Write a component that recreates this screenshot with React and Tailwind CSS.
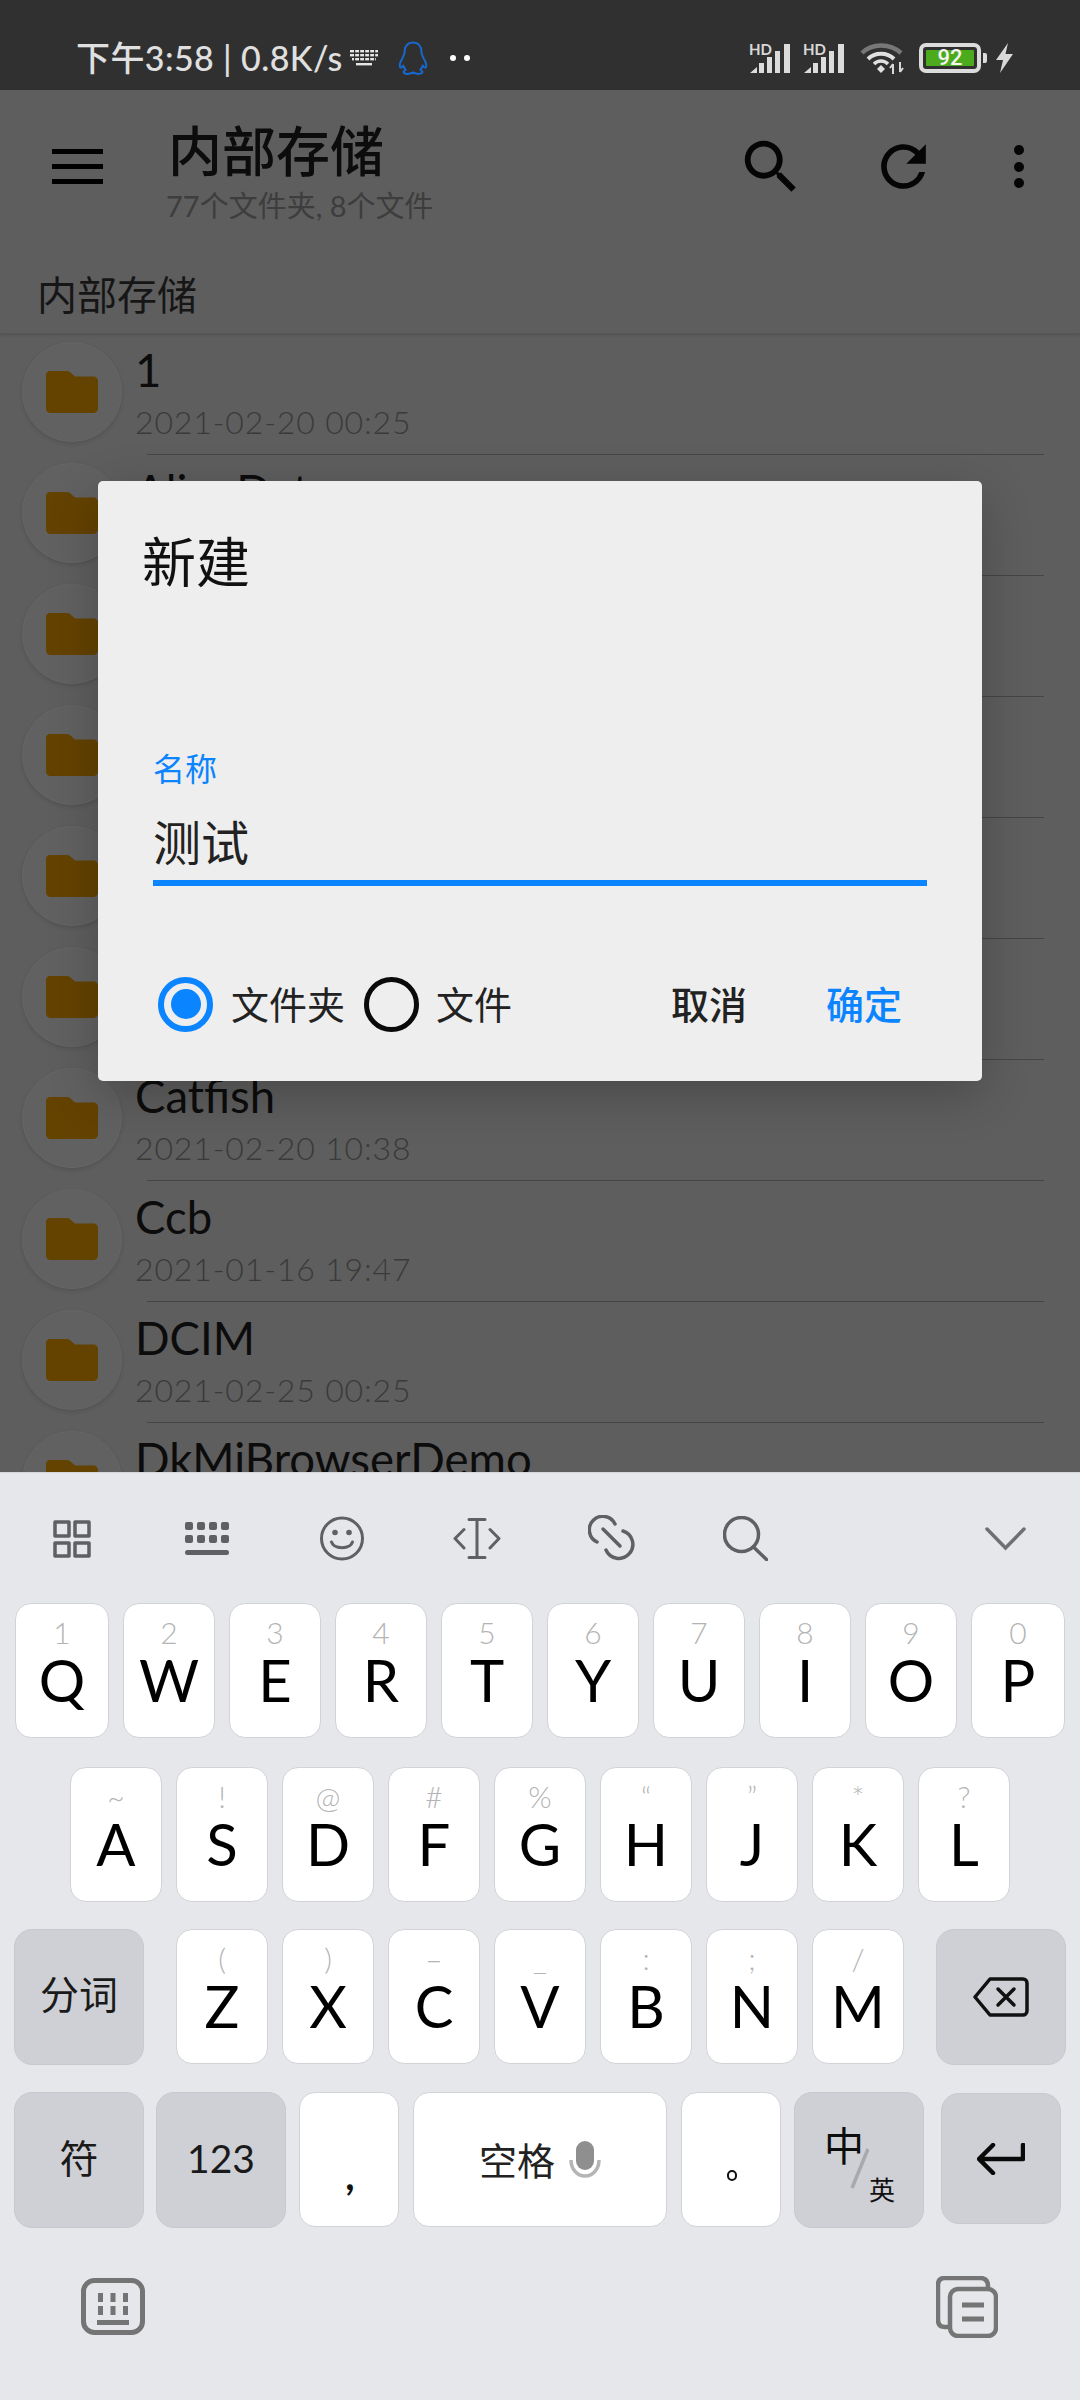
const SANS = '"Lato","Noto Sans CJK SC",sans-serif';

function Signal() {
  return (
    <svg width="41" height="30" viewBox="0 0 41 30">
      <text x="0" y="12" fontSize="15" fontWeight="700" fill="#d8d8d8" fontFamily="Lato, sans-serif">HD</text>
      <polygon points="1,30 8,24 8,30" fill="#dcdcdc" />
      <rect x="10" y="20" width="5" height="10" fill="#dcdcdc" />
      <rect x="18" y="14" width="5" height="16" fill="#dcdcdc" />
      <rect x="26" y="8" width="5" height="22" fill="#dcdcdc" />
      <rect x="35" y="1" width="6" height="29" fill="#dcdcdc" />
    </svg>
  );
}

function Wifi() {
  return (
    <svg width="44" height="32" viewBox="0 0 44 32" fill="none" strokeLinecap="butt">
      <path d="M2 11C12 1 30 1 41 11" stroke="#777" strokeWidth="4.5" />
      <path d="M8 17C15 10 27 10 34 17" stroke="#e0e0e0" strokeWidth="4" />
      <path d="M14 22C18 18 24 18 28 22" stroke="#e0e0e0" strokeWidth="3.5" />
      <path d="M17 27L21 23L25 27L21 31Z" fill="#e0e0e0" />
      <path d="M33 32V22M33 22L30 26M40 20V30M40 30L43 26" stroke="#d8d8d8" strokeWidth="2" />
    </svg>
  );
}

function Battery() {
  return (
    <div className="flex items-center">
      <div className="w-[62px] h-[30px] rounded-[7px] border-[4px] border-[#dcdcdc] p-[3px] flex">
        <div className="flex-1 bg-[#4cab1c] rounded-[1px] flex items-center justify-center text-[#f4f4f4] text-[22px] leading-none font-medium" style={{ fontFamily: '"Roboto",sans-serif' }}>92</div>
      </div>
      <div className="w-[4px] h-[10px] bg-[#dcdcdc] ml-[2px] rounded-r-[2px]" />
    </div>
  );
}

function Status() {
  return (
    <div className="h-[90px] bg-[#303030] flex items-center pt-[26px] text-[#e0e0e0]" style={{ fontFamily: '"Lato","Noto Sans CJK SC",sans-serif' }}>
      <span className="ml-[76px] w-[264px] text-[34px] leading-[40px] font-medium tracking-[0.4px] whitespace-nowrap">下午3:58 | 0.8K/s</span>
      <svg className="ml-[10px]" width="28" height="16" viewBox="0 0 28 16">
        <g fill="#e6e6e6">
          <rect x="0" y="0" width="28" height="2.4" />
          <rect x="0" y="4" width="28" height="2.4" />
          <rect x="2" y="8" width="24" height="2.4" />
          <rect x="6" y="13" width="16" height="2.4" />
        </g>
        <g fill="#303030">
          <rect x="4" y="0" width="1.2" height="11" /><rect x="9" y="0" width="1.2" height="11" /><rect x="14" y="0" width="1.2" height="11" /><rect x="19" y="0" width="1.2" height="11" /><rect x="24" y="0" width="1.2" height="11" />
        </g>
      </svg>
      <svg className="ml-[20px]" width="30" height="34" viewBox="0 0 30 34" fill="none" stroke="#1768cf" strokeWidth="2" strokeLinejoin="round">
        <path d="M15 1.500C9 1.500 6.600 6 6.500 11.500C6.400 14.500 4.500 17 3 20C1.600 23 1.300 26 2.500 26.500C3.600 27 4.600 25.500 5.200 24.500C5.700 26.300 6.600 27.800 7.600 28.800C5.600 29.800 5 31.400 6.400 32.200C8.600 33.400 12.800 33 15 31.400C17.200 33 21.400 33.400 23.600 32.200C25 31.400 24.400 29.800 22.400 28.800C23.400 27.800 24.300 26.300 24.800 24.500C25.400 25.500 26.400 27 27.500 26.500C28.700 26 28.400 23 27 20C25.500 17 23.600 14.500 23.500 11.500C23.400 6 21 1.500 15 1.500Z" />
      </svg>
      <div className="ml-[22px] w-[6px] h-[6px] rounded-full bg-white" />
      <div className="ml-[8px] w-[6px] h-[6px] rounded-full bg-white" />
      <div className="ml-auto flex items-center">
        <Signal />
        <div className="ml-[13px]"><Signal /></div>
        <div className="ml-[16px]"><Wifi /></div>
        <div className="ml-[15px]"><Battery /></div>
        <svg className="ml-[8px] mr-[66px]" width="19" height="30" viewBox="0 0 19 30">
          <path d="M13 0L1 17H8L5 30L18 11H10.500Z" fill="#d8d8d8" />
        </svg>
      </div>
    </div>
  );
}

function Header() {
  return (
    <div className="h-[244px] border-b border-[#555555] shadow-[0_1px_3px_rgba(0,0,0,0.15)] relative">
      <div className="h-[153px] flex items-center">
        <div className="ml-[52px] w-[51px] h-[35px] flex flex-col justify-between">
          <div className="h-[5px] bg-black" />
          <div className="h-[5px] bg-black" />
          <div className="h-[5px] bg-black" />
        </div>
        <div className="ml-[65px] self-start pt-[32px]">
          <div className="text-[54px] leading-[60px] font-medium text-[#0c0c0c]">内部存储</div>
          <div className="text-[29px] leading-[36px] mt-[6px] text-[#3d3d3d] -ml-[2px] whitespace-nowrap">77个文件夹, 8个文件</div>
        </div>
        <svg className="ml-auto" width="70" height="70" viewBox="0 0 24 24" style={{ marginRight: 64 }}>
          <path fill="#050505" d="M15.500 14h-.79l-.28-.27A6.471 6.471 0 0 0 16 9.500 6.500 6.500 0 1 0 9.500 16c1.610 0 3.090-.59 4.230-1.570l.27.28v.79l5 4.990L20.490 19l-4.990-5zm-6 0C7.010 14 5 11.990 5 9.500S7.010 5 9.500 5 14 7.010 14 9.500 11.990 14 9.500 14z" />
        </svg>
        <svg width="67" height="67" viewBox="0 0 24 24" className="mr-[77px]">
          <path fill="#050505" d="M17.650 6.350A7.958 7.958 0 0 0 12 4c-4.420 0-7.990 3.580-7.990 8s3.570 8 7.990 8c3.730 0 6.840-2.550 7.730-6h-2.080A5.990 5.990 0 0 1 12 18c-3.310 0-6-2.690-6-6s2.690-6 6-6c1.660 0 3.140.69 4.220 1.780L13 11h7V4l-2.350 2.350z" />
        </svg>
        <div className="mr-[56px] w-[10px] h-[43px] flex flex-col justify-between">
          <div className="h-[10px] rounded-full bg-[#050505]" />
          <div className="h-[10px] rounded-full bg-[#050505]" />
          <div className="h-[10px] rounded-full bg-[#050505]" />
        </div>
      </div>
      <div className="ml-[37px] mt-[27px] text-[40px] leading-[50px] text-[#161616]">内部存储</div>
    </div>
  );
}

const rows = [
  ['1', '2021-02-20 00:25'],
  ['AlienData', '2021-02-20 00:25'],
  ['Android', '2021-02-20 00:25'],
  ['Apps', '2021-02-20 00:25'],
  ['Backup', '2021-02-20 00:25'],
  ['Books', '2021-02-20 00:25'],
  ['Catfish', '2021-02-20 10:38'],
  ['Ccb', '2021-01-16 19:47'],
  ['DCIM', '2021-02-25 00:25'],
  ['DkMiBrowserDemo', '2021-02-25 00:25'],
];

function Row({ name, date }) {
  return (
    <div className="h-[121px] flex items-start">
      <div className="ml-[22px] mt-[8px] w-[100px] h-[100px] shrink-0 rounded-full bg-[#616161] border border-[#666666] shadow-[0_2px_4px_rgba(0,0,0,0.12)] flex items-center justify-center">
        <svg width="52" height="42" viewBox="0 0 52 42">
          <path d="M4 0H21C23 0 24 1 25 2L29 5.500H47C50 5.500 52 7.500 52 10V37C52 40 50 42 47 42H5C2 42 0 40 0 37V4C0 1.500 2 0 4 0Z" fill="#644200" />
        </svg>
      </div>
      <div className="ml-[13px] flex-1">
        <div className="mt-[11px] h-[50px] text-[45.5px] leading-[50px] text-[#0c0c0c]">{name}</div>
        <div className="mt-[9px] h-[36px] text-[32px] leading-[36px] font-light text-[#3a3a3a] tracking-[0.85px]">{date}</div>
        <div className="mt-[14px] ml-[12px] w-[897px] h-[1px] bg-[#454545]" />
      </div>
    </div>
  );
}

function Dialog() {
  return (
    <div className="absolute left-[98px] top-[391px] w-[884px] h-[600px] bg-[#eeeeee] rounded-[5px] shadow-[0_14px_50px_rgba(0,0,0,0.22)] pt-[52px]">
      <div className="ml-[44px] h-[60px] text-[54px] leading-[60px] text-[#111111]">新建</div>
      <div className="ml-[55px] mt-[156px] h-[40px] text-[32px] leading-[40px] text-[#0a84ff]">名称</div>
      <div className="ml-[55px] mt-[24px] h-[60px] text-[48px] leading-[60px] text-[#222222]">测试</div>
      <div className="ml-[55px] mt-[7px] w-[774px] h-[6px] bg-[#0a84ff]" />
      <div className="mt-[88px] h-[60px] flex items-center text-[38px] leading-[60px]">
        <div className="ml-[60px] w-[55px] h-[55px] rounded-full border-[6px] border-[#0a84ff] flex items-center justify-center">
          <div className="w-[30px] h-[30px] rounded-full bg-[#0a84ff]" />
        </div>
        <span className="ml-[18px] text-[#222222]">文件夹</span>
        <div className="ml-[19px] w-[55px] h-[55px] rounded-full border-[5px] border-[#0a0a0a]" />
        <span className="ml-[17px] text-[#222222]">文件</span>
        <span className="ml-[159px] font-medium text-[#222222]">取消</span>
        <span className="ml-[79px] font-medium text-[#0a84ff]">确定</span>
      </div>
    </div>
  );
}

function Key({ w, sub, label }) {
  return (
    <div className={`${w} h-[135px] bg-white rounded-[16px] border border-[#d2d3d7] flex flex-col items-center shrink-0`}>
      <div className="mt-[10px] h-[36px] text-[30px] leading-[36px] text-[#b4b4b4] font-light">{sub}</div>
      <div className="h-[60px] text-[58px] leading-[60px] text-black">{label}</div>
    </div>
  );
}

const r1 = [['1', 'Q'], ['2', 'W'], ['3', 'E'], ['4', 'R'], ['5', 'T'], ['6', 'Y'], ['7', 'U'], ['8', 'I'], ['9', 'O'], ['0', 'P']];
const r2 = [['~', 'A'], ['!', 'S'], ['@', 'D'], ['#', 'F'], ['%', 'G'], ['“', 'H'], ['”', 'J'], ['*', 'K'], ['?', 'L']];
const r3 = [['(', 'Z'], [')', 'X'], ['–', 'C'], ['_', 'V'], [':', 'B'], [';', 'N'], ['/', 'M']];

function ToolIcons() {
  const s = '#5f6064';
  return (
    <div className="h-[131px] flex items-center">
      <svg className="ml-[53px]" width="38" height="38" viewBox="0 0 38 38" fill="none" stroke={s} strokeWidth="3.500" strokeLinejoin="round">
        <rect x="2" y="2" width="14" height="14" /><rect x="22" y="2" width="14" height="14" /><rect x="2" y="23" width="14" height="13" /><rect x="22" y="23" width="14" height="13" />
      </svg>
      <svg className="ml-[94px]" width="44" height="33" viewBox="0 0 44 33" fill={s}>
        <rect x="0" y="0" width="8" height="8" rx="2" /><rect x="12" y="0" width="8" height="8" rx="2" /><rect x="24" y="0" width="8" height="8" rx="2" /><rect x="36" y="0" width="8" height="8" rx="2" />
        <rect x="0" y="13" width="8" height="8" rx="2" /><rect x="12" y="13" width="8" height="8" rx="2" /><rect x="24" y="13" width="8" height="8" rx="2" /><rect x="36" y="13" width="8" height="8" rx="2" />
        <rect x="0" y="28" width="44" height="5" rx="2.500" />
      </svg>
      <svg className="ml-[91px]" width="44" height="45" viewBox="0 0 44 45" fill="none" stroke={s} strokeWidth="3" strokeLinecap="round">
        <circle cx="22" cy="22.500" r="20.500" />
        <circle cx="15" cy="16.500" r="2.800" fill={s} stroke="none" /><circle cx="29" cy="16.500" r="2.800" fill={s} stroke="none" />
        <path d="M11.500 26C14 33.500 30 33.500 32.500 26" />
      </svg>
      <svg className="ml-[89px]" width="48" height="41" viewBox="0 0 48 41" fill="none" stroke={s} strokeWidth="3" strokeLinecap="round" strokeLinejoin="round">
        <path d="M16 1.500H32M16 39.500H32M24 1.500V39.500" />
        <path d="M11 11.500L2 20.500L11 30M37 11.500L46 20.500L37 30" />
      </svg>
      <svg className="ml-[87px]" width="47" height="47" viewBox="0 0 47 47" fill="none" stroke={s} strokeWidth="3.500" strokeLinecap="round">
        <path d="M27 9A13.500 13.500 0 1 0 9 27" />
        <path d="M35 16A14 14 0 1 1 18 35" />
        <path d="M15 14L32 31" />
      </svg>
      <svg className="ml-[88px]" width="45" height="45" viewBox="0 0 45 45" fill="none" stroke={s} strokeWidth="3.500" strokeLinecap="round">
        <circle cx="18.500" cy="18.500" r="17" /><path d="M30.500 31L43.500 43.500" />
      </svg>
      <svg className="ml-auto mr-[54px]" width="41" height="24" viewBox="0 0 41 24" fill="none" stroke="#6f7074" strokeWidth="3.500" strokeLinecap="round">
        <path d="M2 2L20.500 21L39 2" />
      </svg>
    </div>
  );
}

function DarkKey({ w, h, children }) {
  return <div className={`${w} ${h} bg-[#cfd0d5] rounded-[18px] border border-[#c8c9ce] flex items-center justify-center shrink-0 relative`}>{children}</div>;
}

function Keyboard() {
  return (
    <div className="h-[928px] bg-[#e6e7eb] border-t border-[#d5d6da]">
      <ToolIcons />
      <div className="flex gap-[14px] ml-[15px] -mt-[1px]">
        {r1.map(([s, l], i) => <Key key={l} w={i === 0 || i === 9 ? 'w-[94px]' : 'w-[92px]'} sub={s} label={l} />)}
      </div>
      <div className="flex gap-[14px] ml-[70px] mt-[29px]">
        {r2.map(([s, l]) => <Key key={l} w="w-[92px]" sub={s} label={l} />)}
      </div>
      <div className="flex gap-[14px] ml-[14px] mt-[27px]">
        <DarkKey w="w-[130px] mr-[18px]" h="h-[136px]"><span className="text-[39px] leading-none -mt-[6px] text-[#1a1a1a]">分词</span></DarkKey>
        {r3.map(([s, l]) => <Key key={l} w="w-[92px]" sub={s} label={l} />)}
        <DarkKey w="w-[130px] ml-[18px]" h="h-[136px]">
          <svg width="56" height="40" viewBox="0 0 56 40" fill="none" stroke="#111" strokeWidth="3.500" strokeLinejoin="round" strokeLinecap="round">
            <path d="M17 2H50C52 2 54 3.500 54 6V34C54 36.500 52 38 50 38H17L2 20Z" />
            <path d="M25 12L41 28M41 12L25 28" />
          </svg>
        </DarkKey>
      </div>
      <div className="flex ml-[14px] mt-[27px]">
        <DarkKey w="w-[130px]" h="h-[136px]"><span className="text-[39px] leading-none -mt-[4px] text-[#1a1a1a]">符</span></DarkKey>
        <DarkKey w="w-[130px] ml-[12px]" h="h-[136px]"><span className="text-[39px] leading-none -mt-[4px] text-[#1a1a1a]">123</span></DarkKey>
        <div className="ml-[13px] w-[100px] h-[135px] bg-white rounded-[16px] border border-[#d2d3d7] flex items-center justify-center shrink-0">
          <span className="text-[40px] leading-none font-bold text-[#111] mt-[30px] ml-[2px]">,</span>
        </div>
        <div className="ml-[14px] w-[254px] h-[135px] bg-white rounded-[16px] border border-[#d2d3d7] flex items-center justify-center shrink-0">
          <span className="text-[38px] leading-none text-[#222]">空格</span>
          <svg className="ml-[14px]" width="32" height="37" viewBox="0 0 32 37" fill="none">
            <rect x="7" y="0" width="18" height="29" rx="9" fill="#8f8f8f" />
            <path d="M2 19C2 28 8 35 16 35C24 35 30 28 30 19" stroke="#b5b5b5" strokeWidth="3.500" />
          </svg>
        </div>
        <div className="ml-[14px] w-[100px] h-[135px] bg-white rounded-[16px] border border-[#d2d3d7] flex items-center justify-center shrink-0">
          <span className="w-[10px] h-[11px] rounded-full border-[2px] border-[#111] mt-[32px] ml-[2px]" />
        </div>
        <DarkKey w="w-[130px] ml-[13px]" h="h-[136px]">
          <span className="absolute left-[29px] top-[33px] text-[40px] leading-none text-[#0d0d0d]">中</span>
          <svg className="absolute left-[54px] top-[55px]" width="20" height="42" viewBox="0 0 20 42"><path d="M19 1L3 40" stroke="#a8a9ac" strokeWidth="3.500" /></svg>
          <span className="absolute left-[74px] top-[84px] text-[26px] leading-none text-[#111]">英</span>
        </DarkKey>
        <DarkKey w="w-[120px] ml-[17px] mt-[1px]" h="h-[131px]">
          <svg width="48" height="32" viewBox="0 0 48 32" fill="none" stroke="#0a0a0a" strokeWidth="4.500" strokeLinecap="round" strokeLinejoin="round">
            <path d="M46 2V16H3M16 2L2 16L16 30" />
          </svg>
        </DarkKey>
      </div>
      <div className="flex mt-[48px] items-start">
        <svg className="ml-[81px] mt-[2px]" width="64" height="57" viewBox="0 0 64 57" fill="none">
          <rect x="2.500" y="2.500" width="59" height="52" rx="11" stroke="#747474" strokeWidth="5" />
          <g fill="#747474">
            <rect x="17" y="15" width="5" height="9" /><rect x="29.500" y="15" width="5" height="9" /><rect x="42" y="15" width="5" height="9" />
            <rect x="17" y="28" width="5" height="9" /><rect x="29.500" y="28" width="5" height="9" /><rect x="42" y="28" width="5" height="9" />
            <rect x="16" y="42" width="32" height="5" />
          </g>
        </svg>
        <svg className="ml-auto mr-[82px]" width="62" height="62" viewBox="0 0 62 62" fill="none" stroke="#757575" strokeWidth="4.500">
          <path d="M14 51H9C4.500 51 2 49 2 44V9C2 4.500 4.500 2 9 2H44C49 2 52 4.500 52 10V13" />
          <rect x="14" y="13" width="46" height="47" rx="8" />
          <path d="M26 29H48M26 43H48" strokeWidth="5" />
        </svg>
      </div>
    </div>
  );
}

export default function App() {
  return (
    <div className="w-[1080px] h-[2400px] flex flex-col overflow-hidden bg-[#5e5e5e]" style={{ fontFamily: SANS }}>
      <Status />
      <div className="h-[1382px] relative overflow-hidden">
        <Header />
        {rows.map(([n, d]) => <Row key={n} name={n} date={d} />)}
        <Dialog />
      </div>
      <Keyboard />
    </div>
  );
}
